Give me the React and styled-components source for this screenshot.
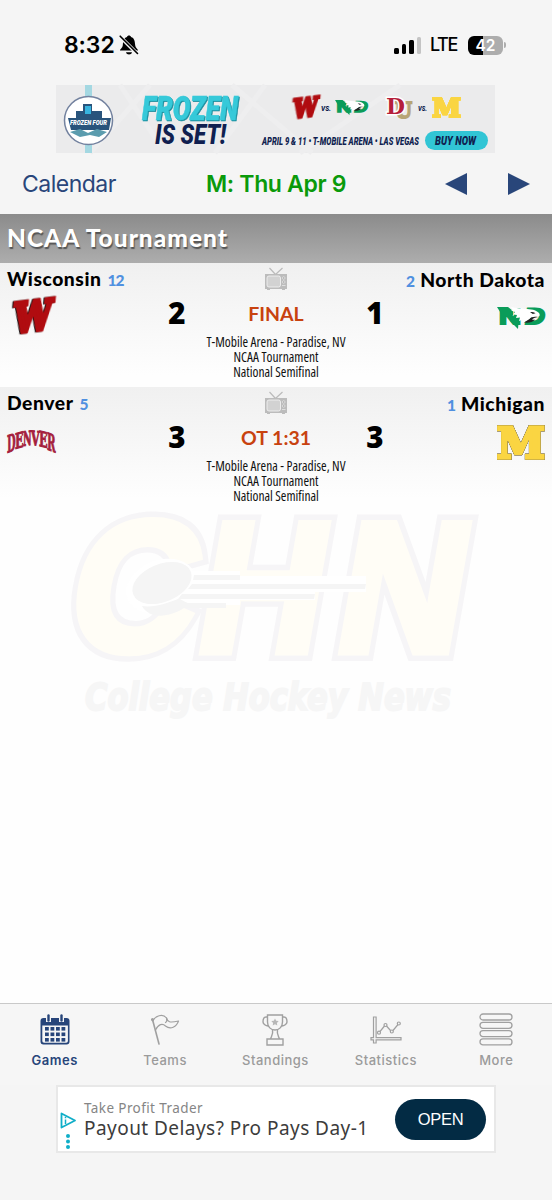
import React from 'react'

import styled, { createGlobalStyle } from 'styled-components';

const GlobalStyle = createGlobalStyle`
  * {
    box-sizing: border-box;
  }

  body {
    margin: 0;
    background: #fff;
    font-family: Lato, 'Open Sans', sans-serif;
  }
`

const Screen = styled.div`
  display: flex;
  flex-direction: column;
  width: 552px;
  height: 1200px;
  overflow: hidden;
  background: #fefefe;

  svg {
    display: block;
    flex: none;
    overflow: visible;
  }
`

const Top = styled.header`
  height: 214px;
  flex: none;
  background: #f5f5f5;
`

const StatusBar = styled.div`
  display: flex;
  align-items: center;
  height: 85px;
  padding: 5px 46px 0 64px;
  font-family: Inter, sans-serif;
  color: #000;
`

const Clock = styled.span`
  font-size: 23px;
  font-weight: 600;
  letter-spacing: -0.1px;
  line-height: 1;
  width: 55px;
`

const Network = styled.span`
  font-size: 18px;
  font-weight: 500;
  letter-spacing: -1.4px;
  line-height: 1;
  width: 38px;
  margin-left: 9px;
`

const Signal = styled.div`
  display: flex;
  align-items: flex-end;
  gap: 3px;
  margin-left: auto;
  height: 17px;
`

const SignalBar = styled.i`
  width: 4.5px;
  height: ${props => props.$h}px;
  border-radius: 1.5px;
  background: ${props => props.$off ? '#c4c4c4' : '#000'};
`

const Battery = styled.div`
  display: flex;
  align-items: center;
  justify-content: center;
  width: 35px;
  height: 19px;
  border-radius: 6px;
  background: linear-gradient(90deg, #000 43%, #adadad 43%);
  color: #fff;
  font-size: 15.5px;
  font-weight: 600;
`

const BatteryTip = styled.i`
  width: 2px;
  height: 6px;
  margin-left: 1px;
  border-radius: 0 2px 2px 0;
  background: #adadad;
`

const BannerLink = styled.div`
  width: 439px;
  height: 68px;
  margin-left: 56px;
`

const Nav = styled.nav`
  display: flex;
  align-items: center;
  height: 61px;
  padding: 1px 22px 0 22px;
  font-family: Inter, sans-serif;
  font-size: 23px;
`

const CalendarLink = styled.span`
  width: 184px;
  color: #29467a;
  letter-spacing: -0.5px;
`

const CurrentDay = styled.span`
  color: #0a9a0a;
  font-weight: 600;
  letter-spacing: -0.35px;
  white-space: nowrap;
`

const Arrows = styled.div`
  display: flex;
  gap: 41px;
  margin-left: auto;
`

const SectionTitle = styled.h2`
  height: 49px;
  flex: none;
  margin: 0;
  padding-left: 7px;
  background: linear-gradient(#8b8b8b, #adadad);
  color: #fff;
  font-size: 24.5px;
  font-weight: 900;
  line-height: 48px;
  letter-spacing: 1px;
  text-shadow: 1px 2px 1px #555;
`

const GameRow = styled.section`
  display: grid;
  grid-template-columns: 155px 228px 155px;
  height: 124px;
  flex: none;
  padding: 0 7px;
  background: linear-gradient(#f0f0f0, #fefefe 90%);
`

const Team = styled.div`
  display: flex;
  flex-direction: column;
  align-items: ${props => props.$away ? 'flex-start' : 'flex-end'};
`

const TeamName = styled.div`
  display: flex;
  flex-direction: ${props => props.$away ? 'row' : 'row-reverse'};
  align-items: baseline;
  gap: 6px;
  height: 32px;
  padding-top: ${props => props.$away ? 5 : 6}px;
  font-size: 19.3px;
  font-weight: 900;
  line-height: 22px;
  letter-spacing: 0.55px;
  white-space: nowrap;
`

const Rank = styled.span`
  color: #5090e0;
  font-size: 15.5px;
  font-weight: 900;
  letter-spacing: -0.9px;
`

const Middle = styled.div`
  display: flex;
  flex-direction: column;
  align-items: center;
  padding-top: 4px;
`

const ScoreLine = styled.div`
  display: grid;
  grid-template-columns: 30px 1fr 30px;
  align-items: center;
  width: 228px;
  height: 40px;
  margin-top: 2px;
`

const Score = styled.span`
  font-family: 'Open Sans', sans-serif;
  font-size: 29.5px;
  font-weight: 800;
  line-height: 40px;
  text-align: center;
`

const Status = styled.span`
  color: #c8420f;
  font-size: 19.5px;
  font-weight: 700;
  text-align: center;
`

const Venue = styled.div`
  font-family: 'Open Sans', sans-serif;
  font-size: 13.5px;
  font-stretch: 75%;
  line-height: 15px;
  margin-top: 2px;
  color: #111;
  text-align: center;
  white-space: nowrap;
`

const Body = styled.main`
  height: 492px;
  flex: none;
  padding-left: 70px;
`

const TabBar = styled.nav`
  display: grid;
  grid-template-columns: repeat(5, 110.4px);
  height: 82px;
  flex: none;
  border-top: 1px solid #c9c9c9;
  background: #f6f6f6;
`

const Tab = styled.div`
  display: flex;
  flex-direction: column;
  align-items: center;
  gap: 6px;
  padding: 9px 1px 0 0;
  color: ${props => props.$active ? '#27457a' : '#9b9b9b'};
  font-family: Inter, sans-serif;
  font-size: 13px;
  line-height: 15px;
  font-weight: ${props => props.$active ? 600 : 500};
  letter-spacing: 0.5px;
`

const Footer = styled.footer`
  flex: 1;
  padding-left: 56px;
  background: #f5f5f5;
`

const AdCard = styled.div`
  display: flex;
  align-items: center;
  width: 440px;
  height: 68px;
  padding: 0 8px 0 2px;
  border: 2px solid #e8e8e8;
  background: #fff;
`

const AdChoices = styled.div`
  padding-top: 24px;
  width: 24px;
`

const AdCopy = styled.div`
  flex: 1;
  font-family: 'Noto Sans', sans-serif;
  white-space: nowrap;
`

const Advertiser = styled.div`
  color: #858585;
  font-size: 13.5px;
  line-height: 18px;
  letter-spacing: 0.4px;
`

const Headline = styled.div`
  color: #3c3c3c;
  font-size: 19px;
  line-height: 22px;
  letter-spacing: 0.45px;
`

const OpenButton = styled.button`
  width: 91px;
  height: 41px;
  border: 0;
  border-radius: 21px;
  background: #032b44;
  color: #fff;
  font-family: 'Liberation Sans', sans-serif;
  font-size: 16.5px;
  letter-spacing: -0.3px;
`

const ShadowText = styled.text`
  filter: drop-shadow(1px 1px 0 #1a8e9e);
`

const OutlinedText = styled.text`
  filter: drop-shadow(0 0 0.7px ${props => props.$outline}) drop-shadow(0 0 0.4px ${props => props.$outline});
`

const BellOff = () => (
  <svg width="20" height="22" viewBox="0 0 20 22">
    <path d="M1 16.500c0-1.400 2.400-2.200 2.800-5.200C4.200 7 4.600 4 8 3c.3-2 3.700-2 4 0 3.400 1 3.800 4 4.200 8.300.4 3 2.800 3.800 2.800 5.200z" fill="#000" />
    <path d="M7 18.200h6c-.5 3-5.500 3-6 0z" fill="#000" />
    <path d="M1 2.500 18.500 20" stroke="#f5f5f5" strokeWidth="3.800" />
    <path d="M1.200 2.200 18.500 19.500" stroke="#000" strokeWidth="1.600" strokeLinecap="round" />
  </svg>
)

const WisconsinLogo = ({ width = 48, height = 44, outline = '#111' }) => (
  <svg width={width} height={height} viewBox="0 0 48 44">
    <text
      transform="translate(6 37) skewY(-7) skewX(-5)"
      fontFamily="DejaVu Serif" fontWeight="700" fontSize="41" textLength="38" lengthAdjust="spacingAndGlyphs"
      fill="#b00c10" stroke="#b00c10" strokeWidth="4.500"
      style={{ filter: `drop-shadow(-.8px .8px 0 ${outline})` }}
    >W</text>
  </svg>
)

const NorthDakotaLogo = ({ width = 48, height = 24 }) => (
  <svg width={width} height={height} viewBox="0 0 48 24">
    <g fontFamily="Liberation Sans" fontWeight="700" fill="#0a9c59" stroke="#0a9c59" strokeWidth="2">
      <text x="2" y="18" fontSize="22" textLength="22" lengthAdjust="spacingAndGlyphs">N</text>
      <text transform="translate(27 18) skewX(-8)" fontSize="22.500" textLength="20" lengthAdjust="spacingAndGlyphs">D</text>
    </g>
    <path d="M0 1h11l5 4v4H5zM12 9l4 3 6-1-1 12-8-8z" fill="#0a9c59" />
    <path d="M14 1c5 1.500 10 1 14 2 6 0 11 1 13.500 3.500 1.500 1.500 1.500 3 .5 4-4-.5-7 .5-9 2.500-2 2-5 3.500-9 3.500l2-3-4 1.500 1-3.500-4 .5 1-3-4-.5 2-2.500-4-1.500 2-.5z" fill="#fff" />
    <path d="M33 6c3 0 4.500.3 5.500 1.300l-2.700.7zM41 11c-4-.7-7 0-8.500 2L27 16.500c5 .5 8.500-.3 11-2.800h-3c1-1.300 3-2 6-2.700z" fill="#222" />
  </svg>
)

// letter, baseline, cap height, slope
const denverLetters = [
  ['D', 25, 19, -20],
  ['E', 21, 17, -15],
  ['N', 18, 16, -7],
  ['V', 17, 16, 5],
  ['E', 18, 17, 13],
  ['R', 21.5, 19, 20],
]

const DenverLogo = () => (
  <svg width="50" height="30" viewBox="0 0 50 30">
    <g fontFamily="DejaVu Serif" fontWeight="700" fill="#a51f3d" stroke="#a51f3d" strokeWidth="1">
      {denverLetters.map(([letter, y, h, slope], i) => (
        <text
          key={i} transform={`translate(${i * 8} ${y + 1}) skewY(${slope})`}
          fontSize={h * 1.25} textLength="8.600" lengthAdjust="spacingAndGlyphs"
        >{letter}</text>
      ))}
    </g>
  </svg>
)

const MichiganLogo = ({ width = 50, height = 37, outline = '#445' }) => (
  <svg width={width} height={height} viewBox="0 0 50 37">
    <OutlinedText
      x="2" y="34" fontFamily="DejaVu Serif" fontWeight="700" fontSize="43" textLength="48" lengthAdjust="spacingAndGlyphs"
      fill="#fad542" stroke="#fad542" strokeWidth="3.500" $outline={outline}
    >M</OutlinedText>
  </svg>
)

const Banner = () => (
  <svg width="439" height="68" viewBox="56 85 439 68">
    <rect x="56" y="85" width="439" height="68" fill="#ebebec" />
    <g stroke="#eeeeef" strokeWidth="5">
      <path d="M90 153l60-68M215 153l50-68M232 85l80 68M300 153l100-68M120 85l40 60" />
    </g>
    <path d="M85 85h7v68h-7z" fill="#a4d8e2" />
    <circle cx="88.500" cy="120.500" r="24" fill="#fff" stroke="#73829f" strokeWidth="1.500" />
    <path d="M83 104h9v7h10v7h9l-2 12H71l-3-12h8v-7h7z" fill="#29547c" />
    <path d="M85 106h6v8h-6z" fill="#38b4df" />
    <path d="M70 132l10-3 8 4 9-4 10 3-8 5-9-2-10 2z" fill="#5b9cae" />
    <text x="70" y="125" fontFamily="Roboto" fontWeight="900" fontStyle="italic" fontSize="7.500" fill="#fff" textLength="37" lengthAdjust="spacingAndGlyphs">FROZEN FOUR</text>
    <g fontFamily="Roboto" fontWeight="900" fontStyle="italic" fill="#101f50">
      <ShadowText x="142" y="119.500" fontSize="34" fill="#36c9d9" stroke="#36c9d9" strokeWidth=".6" textLength="96" lengthAdjust="spacingAndGlyphs">FROZEN</ShadowText>
      <text x="155" y="144" fontSize="27" textLength="71" lengthAdjust="spacingAndGlyphs">IS SET!</text>
      <text x="262" y="144.500" fontSize="11" textLength="157" lengthAdjust="spacingAndGlyphs">APRIL 9 &amp; 11 • T-MOBILE ARENA • LAS VEGAS</text>
      <text x="321" y="111" fontSize="8" textLength="10" lengthAdjust="spacingAndGlyphs">VS.</text>
      <text x="418" y="111" fontSize="8" textLength="9" lengthAdjust="spacingAndGlyphs">VS.</text>
      <rect x="425" y="131" width="63" height="19" rx="9.500" fill="#31c5d5" />
      <text x="435" y="144.500" fontSize="12" textLength="41" lengthAdjust="spacingAndGlyphs">BUY NOW</text>
    </g>
    <g transform="translate(289 94)"><WisconsinLogo width="31" height="29" outline="#b66" /></g>
    <g transform="translate(335 99)"><NorthDakotaLogo width="33" height="17" /></g>
    <g fontFamily="DejaVu Serif" fontWeight="700" fontSize="22">
      <text x="395" y="118" fill="#b7a576" stroke="#b7a576" strokeWidth="2" textLength="17" lengthAdjust="spacingAndGlyphs">U</text>
      <text x="386" y="114" fill="#b51f3b" stroke="#fff" strokeWidth="3" paintOrder="stroke" textLength="19" lengthAdjust="spacingAndGlyphs">D</text>
    </g>
    <g transform="translate(431 97)"><MichiganLogo width="30" height="22" outline="#fad542" /></g>
  </svg>
)

const Television = () => (
  <svg width="24" height="24" viewBox="0 0 24 24">
    <path d="M5.500 1l6 6.500M18.500 1l-7 6.500" stroke="#bbb" strokeWidth="1.200" fill="none" />
    <rect x="1" y="7" width="22" height="15" fill="#bcbcbc" />
    <rect x="3" y="9" width="13.500" height="11" rx="2" fill="#d2d2d2" stroke="#f5f5f5" strokeWidth=".8" />
    <circle cx="19.700" cy="11" r="1.300" fill="#b0b0b0" stroke="#eee" strokeWidth=".6" />
    <circle cx="19.700" cy="15" r="1.300" fill="#b0b0b0" stroke="#eee" strokeWidth=".6" />
    <path d="M18 18.500h3.500" stroke="#e8e8e8" strokeWidth=".8" />
    <path d="M3 22h3v1H3zM18 22h3v1h-3z" fill="#bcbcbc" />
  </svg>
)

const Watermark = () => (
  <svg width="420" height="215" viewBox="70 505 420 215">
    <g fontFamily="Liberation Sans" fontWeight="700" fontSize="184">
      {[['#f6f5f7', 20], ['#fffdf6', 9]].map(([color, width]) => (
        <g key={color} fill={color} stroke={color} strokeWidth={width}>
          <text transform="translate(64 644) skewX(-10)" textLength="124" lengthAdjust="spacingAndGlyphs">C</text>
          <text transform="translate(192 645) skewX(-10)" textLength="124" lengthAdjust="spacingAndGlyphs">H</text>
          <text transform="translate(331 645) skewX(-10)" textLength="126" lengthAdjust="spacingAndGlyphs">N</text>
        </g>
      ))}
    </g>
    <ellipse cx="161" cy="580" rx="36" ry="26" fill="#fff" transform="rotate(-20 161 580)" />
    <path d="M185 565h55v5h126v16h-51v8h-75v5h-75z" fill="#fff" />
    <ellipse cx="162" cy="577" rx="31" ry="19" fill="#f5f5f5" transform="rotate(-22 162 577)" />
    <path d="M142 600c12 2 26-3 36-7 4 0 4 2 10 4h38v5h-42c-14 9-34 12-42-2z" fill="#f5f5f5" />
    <path d="M194 569h46v5h-47zM192 578h174l-1 5H188zM182 588h133l-1 5H178z" fill="#f5f5f5" />
    <text
      x="85" y="704" fontFamily="DejaVu Sans" fontWeight="700" fontStyle="italic" fontSize="37"
      fill="#f6f6f6" stroke="#f6f6f6" strokeWidth="2" textLength="366" lengthAdjust="spacingAndGlyphs"
    >College Hockey News</text>
  </svg>
)

const GamesIcon = () => (
  <svg width="34" height="34" viewBox="0 0 34 34">
    <path d="M5.500 5h23q3 0 3 3v20.500q0 3-3 3h-23q-3 0-3-3V8q0-3 3-3zM4.300 12.500V28q0 1.800 1.800 1.800h22q1.800 0 1.800-1.800V12.500z" fill="#27457a" fillRule="evenodd" />
    {[10.5, 23.5].map(x => (
      <path key={x} d={`M${x} 3v6`} stroke="#f6f6f6" strokeWidth="5" />
    ))}
    {[10.5, 23.5].map(x => (
      <path key={x} d={`M${x} 2.500v5`} stroke="#27457a" strokeWidth="2.400" strokeLinecap="round" />
    ))}
    {[14, 19.5, 25].map(y => (
      [7, 12.5, 18, 23.5].map(x => <rect key={x} x={x} y={y} width="3.800" height="3.600" fill="#27457a" />)
    ))}
  </svg>
)

const TeamsIcon = () => (
  <svg width="34" height="34" viewBox="0 0 34 34" fill="none" stroke="#a0a0a0" strokeWidth="1.200" strokeLinejoin="round" strokeLinecap="round">
    <path d="M11 31 4.500 6.500" strokeWidth="1.600" />
    <path d="M4.500 8c3-5 10-8 14-3 1 4 3 5 12 3-2 6-8 9-13 5-3-3-7-2-10 4" />
    <path d="M18.500 5c.5 2 0 4-1 4.500" />
    <circle cx="4.500" cy="6.500" r="1" />
  </svg>
)

const StandingsIcon = () => (
  <svg width="34" height="34" viewBox="0 0 34 34" fill="none" stroke="#a0a0a0" strokeWidth="1.400">
    <path d="M9.500 2h15v7c0 5-3.500 8-7.500 8s-7.500-3-7.500-8zM9.500 4H8C5 4 5 7 5 9s3 4 5 4M24.500 4H26c3 0 3 3 3 5s-3 4-5 4" />
    <path d="M14.500 17c1 4-1 6-2 9h9c-1-3-3-5-2-9M9 26h16v6H9z" />
    <path d="M17 5.500l1.200 2.300 2.500.3-1.800 1.800.4 2.500L17 11.200l-2.300 1.200.4-2.500-1.800-1.800 2.500-.3z" fill="#b8b8b8" stroke="none" />
  </svg>
)

const StatisticsIcon = () => (
  <svg width="34" height="34" viewBox="0 0 34 34" fill="none" stroke="#a0a0a0" strokeWidth="1.200">
    <path d="M4.500 4h2.600v20.600H32v2.200H7.100V30H4.500v-3.200H2v-2.200h2.500z" />
    <path d="M11 18.500l4.500-5.500M17.500 13l4 4.500M24 17.500l5-6" />
    <circle cx="10" cy="19.700" r="1.500" />
    <circle cx="16.500" cy="12" r="1.500" />
    <circle cx="22.800" cy="18.500" r="1.500" />
    <circle cx="29.800" cy="10.500" r="1.500" />
  </svg>
)

const MoreIcon = () => (
  <svg width="34" height="34" viewBox="0 0 34 34" fill="none" stroke="#a0a0a0" strokeWidth="1.300">
    {[1, 9.3, 17.6, 25.9].map(y => (
      <rect key={y} x="1" y={y} width="32" height="6" rx="3" />
    ))}
  </svg>
)

const games = [
  {
    away: 'Wisconsin', awayRank: 12, awayScore: 2, AwayLogo: WisconsinLogo,
    home: 'North Dakota', homeRank: 2, homeScore: 1, HomeLogo: NorthDakotaLogo,
    status: 'FINAL',
  },
  {
    away: 'Denver', awayRank: 5, awayScore: 3, AwayLogo: DenverLogo,
    home: 'Michigan', homeRank: 1, homeScore: 3, HomeLogo: MichiganLogo,
    status: 'OT 1:31',
  },
]

const LogoSlot = styled.div`
  display: flex;
  align-items: center;
  height: 46px;
`

const Game = ({ game }) => (
  <GameRow>
    <Team $away>
      <TeamName $away>{game.away}<Rank>{game.awayRank}</Rank></TeamName>
      <LogoSlot><game.AwayLogo /></LogoSlot>
    </Team>
    <Middle>
      <Television />
      <ScoreLine>
        <Score>{game.awayScore}</Score>
        <Status>{game.status}</Status>
        <Score>{game.homeScore}</Score>
      </ScoreLine>
      <Venue>
        T-Mobile Arena - Paradise, NV<br />
        NCAA Tournament<br />
        National Semifinal
      </Venue>
    </Middle>
    <Team>
      <TeamName>{game.home}<Rank>{game.homeRank}</Rank></TeamName>
      <LogoSlot><game.HomeLogo /></LogoSlot>
    </Team>
  </GameRow>
)

const App = () => (
  <Screen>
    <GlobalStyle />
    <Top>
      <StatusBar>
        <Clock>8:32</Clock>
        <BellOff />
        <Signal>
          <SignalBar $h={6} />
          <SignalBar $h={10} />
          <SignalBar $h={13.5} />
          <SignalBar $h={17} $off />
        </Signal>
        <Network>LTE</Network>
        <Battery>42</Battery>
        <BatteryTip />
      </StatusBar>
      <BannerLink><Banner /></BannerLink>
      <Nav>
        <CalendarLink>Calendar</CalendarLink>
        <CurrentDay>M: Thu Apr 9</CurrentDay>
        <Arrows>
          <svg width="22" height="22" viewBox="0 0 22 22"><path d="M0 11 22 0v22z" fill="#29467a" /></svg>
          <svg width="22" height="22" viewBox="0 0 22 22"><path d="M22 11 0 0v22z" fill="#29467a" /></svg>
        </Arrows>
      </Nav>
    </Top>
    <SectionTitle>NCAA Tournament</SectionTitle>
    {games.map(game => <Game key={game.away} game={game} />)}
    <Body><Watermark /></Body>
    <TabBar>
      <Tab $active><GamesIcon />Games</Tab>
      <Tab><TeamsIcon />Teams</Tab>
      <Tab><StandingsIcon />Standings</Tab>
      <Tab><StatisticsIcon />Statistics</Tab>
      <Tab><MoreIcon />More</Tab>
    </TabBar>
    <Footer>
      <AdCard>
        <AdChoices>
          <svg width="18" height="38" viewBox="0 0 18 38">
            <path d="M1.500 1.500 15 8.500l-13.500 7z" fill="none" stroke="#10aec8" strokeWidth="1.800" strokeLinejoin="round" />
            <path d="M5.500 7.500v4.500M5.500 4.800v1.400" stroke="#10aec8" strokeWidth="1.500" />
            <circle cx="8" cy="24" r="2" fill="#10aec8" />
            <circle cx="8" cy="29.500" r="2" fill="#10aec8" />
            <circle cx="8" cy="35" r="2" fill="#10aec8" />
          </svg>
        </AdChoices>
        <AdCopy>
          <Advertiser>Take Profit Trader</Advertiser>
          <Headline>Payout Delays? Pro Pays Day-1</Headline>
        </AdCopy>
        <OpenButton>OPEN</OpenButton>
      </AdCard>
    </Footer>
  </Screen>
)

export default App
